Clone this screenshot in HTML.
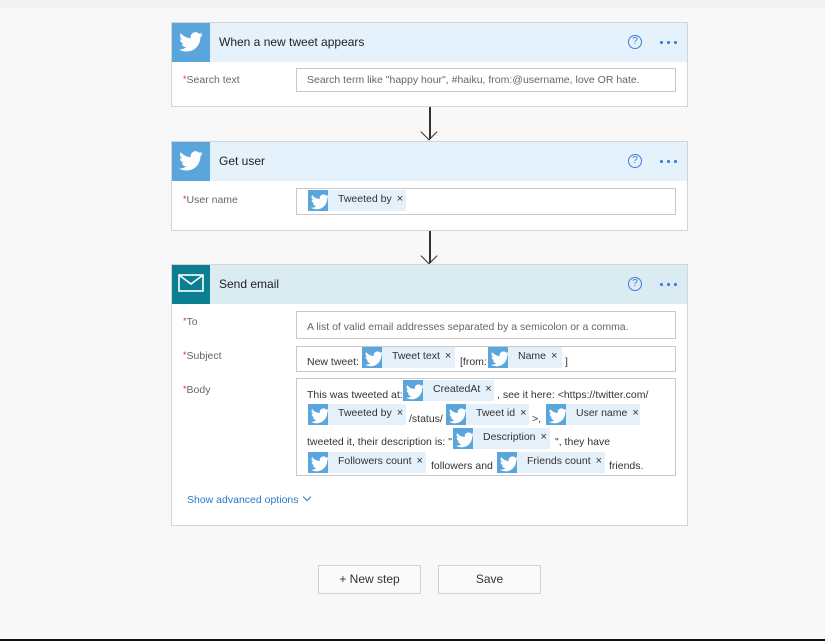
<!DOCTYPE html>
<html><head><meta charset="utf-8"><style>
*{box-sizing:border-box;margin:0;padding:0}
body{width:825px;height:641px;background:#f8f8f8;position:relative;overflow:hidden;font-family:"Liberation Sans",sans-serif;font-size:10.5px;color:#333}
.a{position:absolute}
.card{position:absolute;left:171px;width:517px;background:#fff;border:1px solid #d4d4d4}
.hdr{position:absolute;left:0;top:0;right:0;height:39px;background:#e5f1fb}
.ico{position:absolute;left:0;top:0;width:38px;height:39px;background:#5aa5dc}
.ttl{position:absolute;left:47px;top:12px;font-size:12px;color:#222}
.help{position:absolute;left:456px;top:12px;width:14px;height:14px;border:1.3px solid #3a7be0;border-radius:50%;color:#3a7be0;font-size:10px;line-height:11px;text-align:center}
.dots{position:absolute;left:488px;top:18px;width:18px;height:3px}
.dots i{position:absolute;top:0;width:2.5px;height:2.5px;border-radius:50%;background:#3a7be0}
.lbl{position:absolute;left:11px;font-size:10.5px;color:#666}
.lbl b{color:#d13438;font-weight:normal;font-size:9px;vertical-align:top}
.inp{position:absolute;left:124px;width:380px;border:1px solid #c8c8c8;background:#fff}
.ph{position:absolute;left:10px;color:#666;font-size:10.5px}
.tk{position:absolute;height:21px;background:#e4f0fa;font-size:10.5px;color:#333;line-height:19px;white-space:nowrap}
.tk i{position:absolute;left:0;top:0;width:20px;height:21px;background:#5aa5dc}
.tk span{margin-left:30px}
.tk em{font-style:normal;margin-left:5px;font-size:11px}
.t{position:absolute;white-space:nowrap;font-size:10.5px;color:#333}
.btn{position:absolute;top:565px;width:103px;height:29px;border:1px solid #d0d0d0;background:#fafafa;text-align:center;line-height:27px;font-size:12px;color:#333}
.ar{position:absolute;left:423px;width:12px;height:12px;border-right:1.5px solid #333;border-bottom:1.5px solid #333;transform:rotate(45deg)}
</style></head><body>
<div class="a" style="left:0;top:0;width:825px;height:8px;background:#f2f2f2"></div>
<svg width="0" height="0" style="position:absolute"><defs><symbol id="tw" viewBox="0 0 24 24"><path fill="#fff" d="M23 5.1c-.8.4-1.7.6-2.6.7.9-.6 1.6-1.4 2-2.5-.9.5-1.9.9-2.9 1.1a4.5 4.5 0 0 0-7.7 4.1C8 8.3 4.7 6.5 2.5 3.8a4.5 4.5 0 0 0 1.4 6 4.4 4.4 0 0 1-2-.6v.1c0 2.2 1.6 4 3.6 4.4a4.5 4.5 0 0 1-2 .1 4.5 4.5 0 0 0 4.2 3.1A9 9 0 0 1 1 18.8 12.7 12.7 0 0 0 7.9 20.8c8.3 0 12.8-6.9 12.8-12.8v-.6c.9-.6 1.6-1.4 2.3-2.3z"/></symbol></defs></svg>

<div class="card" style="top:22px;height:85px">
 <div class="hdr"></div><div class="ico"><svg class="a" style="left:6px;top:6px" width="26" height="26"><use href="#tw"/></svg></div>
 <div class="ttl">When a new tweet appears</div><div class="help">?</div><div class="dots"><i style="left:0"></i><i style="left:7px"></i><i style="left:14px"></i></div>
 <div class="lbl" style="top:51px"><b>*</b>Search text</div>
 <div class="inp" style="top:45px;height:24px"><div class="ph" style="top:5px">Search term like "happy hour", #haiku, from:@username, love OR hate.</div></div>
</div>
<div class="a" style="left:429px;top:107px;width:1.5px;height:32px;background:#333"></div>
<div class="ar" style="top:126px"></div>

<div class="card" style="top:141px;height:90px">
 <div class="hdr"></div><div class="ico"><svg class="a" style="left:6px;top:6px" width="26" height="26"><use href="#tw"/></svg></div>
 <div class="ttl">Get user</div><div class="help">?</div><div class="dots"><i style="left:0"></i><i style="left:7px"></i><i style="left:14px"></i></div>
 <div class="lbl" style="top:52px"><b>*</b>User name</div>
 <div class="inp" style="top:46px;height:27px"></div>
</div>
<div class="a" style="left:429px;top:231px;width:1.5px;height:32px;background:#333"></div>
<div class="ar" style="top:250px"></div>

<div class="card" style="top:264px;height:262px">
 <div class="hdr" style="background:#daebf1"></div><div class="ico" style="background:#0a7f92"><svg class="a" style="left:6px;top:9px" width="26" height="20" viewBox="0 0 26 20"><rect x="1" y="1" width="24" height="16" fill="none" stroke="#fff" stroke-width="1.6"/><path d="M1 1l12 9 12-9" fill="none" stroke="#fff" stroke-width="1.6"/></svg></div>
 <div class="ttl">Send email</div><div class="help">?</div><div class="dots"><i style="left:0"></i><i style="left:7px"></i><i style="left:14px"></i></div>
 <div class="lbl" style="top:51px"><b>*</b>To</div>
 <div class="inp" style="top:46px;height:28px"><div class="ph" style="top:9px">A list of valid email addresses separated by a semicolon or a comma.</div></div>
 <div class="lbl" style="top:85px"><b>*</b>Subject</div>
 <div class="inp" style="top:81px;height:26px"></div>
 <div class="lbl" style="top:119px"><b>*</b>Body</div>
 <div class="inp" style="top:113px;height:98px"></div>
 <div class="a" style="left:15px;top:229px;color:#2b79c9;font-size:10.5px">Show advanced options &nbsp;<span style="display:inline-block;width:6px;height:6px;border-right:1px solid #2b79c9;border-bottom:1px solid #2b79c9;transform:rotate(45deg);position:relative;top:-3px"></span></div>
</div>

<div class="tk" style="left:308px;top:190px;width:98px"><i><svg width="20" height="20" viewBox="-3 -3 30 30"><use href="#tw"/></svg></i><span>Tweeted by</span><em>×</em></div>

<div class="t" style="left:307px;top:356px">New tweet:</div>
<div class="tk" style="left:362px;top:347px;width:93px"><i><svg width="20" height="20" viewBox="-3 -3 30 30"><use href="#tw"/></svg></i><span>Tweet text</span><em>×</em></div>
<div class="t" style="left:460px;top:356px">[from:</div>
<div class="tk" style="left:488px;top:347px;width:74px"><i><svg width="20" height="20" viewBox="-3 -3 30 30"><use href="#tw"/></svg></i><span>Name</span><em>×</em></div>
<div class="t" style="left:565px;top:356px">]</div>

<div class="t" style="left:307px;top:389px">This was tweeted at:</div>
<div class="tk" style="left:403px;top:380px;width:91px"><i><svg width="20" height="20" viewBox="-3 -3 30 30"><use href="#tw"/></svg></i><span>CreatedAt</span><em>×</em></div>
<div class="t" style="left:497px;top:389px">, see it here: &lt;https://twitter.com/</div>
<div class="tk" style="left:308px;top:404px;width:98px"><i><svg width="20" height="20" viewBox="-3 -3 30 30"><use href="#tw"/></svg></i><span>Tweeted by</span><em>×</em></div>
<div class="t" style="left:409px;top:413px">/status/</div>
<div class="tk" style="left:446px;top:404px;width:83px"><i><svg width="20" height="20" viewBox="-3 -3 30 30"><use href="#tw"/></svg></i><span>Tweet id</span><em>×</em></div>
<div class="t" style="left:532px;top:413px">&gt;,</div>
<div class="tk" style="left:546px;top:404px;width:94px"><i><svg width="20" height="20" viewBox="-3 -3 30 30"><use href="#tw"/></svg></i><span>User name</span><em>×</em></div>
<div class="t" style="left:307px;top:436px">tweeted it, their description is: "</div>
<div class="tk" style="left:453px;top:428px;width:97px"><i><svg width="20" height="20" viewBox="-3 -3 30 30"><use href="#tw"/></svg></i><span>Description</span><em>×</em></div>
<div class="t" style="left:555px;top:436px">", they have</div>
<div class="tk" style="left:308px;top:452px;width:118px"><i><svg width="20" height="20" viewBox="-3 -3 30 30"><use href="#tw"/></svg></i><span>Followers count</span><em>×</em></div>
<div class="t" style="left:431px;top:460px">followers and</div>
<div class="tk" style="left:497px;top:452px;width:108px"><i><svg width="20" height="20" viewBox="-3 -3 30 30"><use href="#tw"/></svg></i><span>Friends count</span><em>×</em></div>
<div class="t" style="left:609px;top:460px">friends.</div>

<div class="btn" style="left:318px">+ New step</div>
<div class="btn" style="left:438px">Save</div>
<div class="a" style="left:0;top:639px;width:825px;height:2px;background:#111"></div>
</body></html>
